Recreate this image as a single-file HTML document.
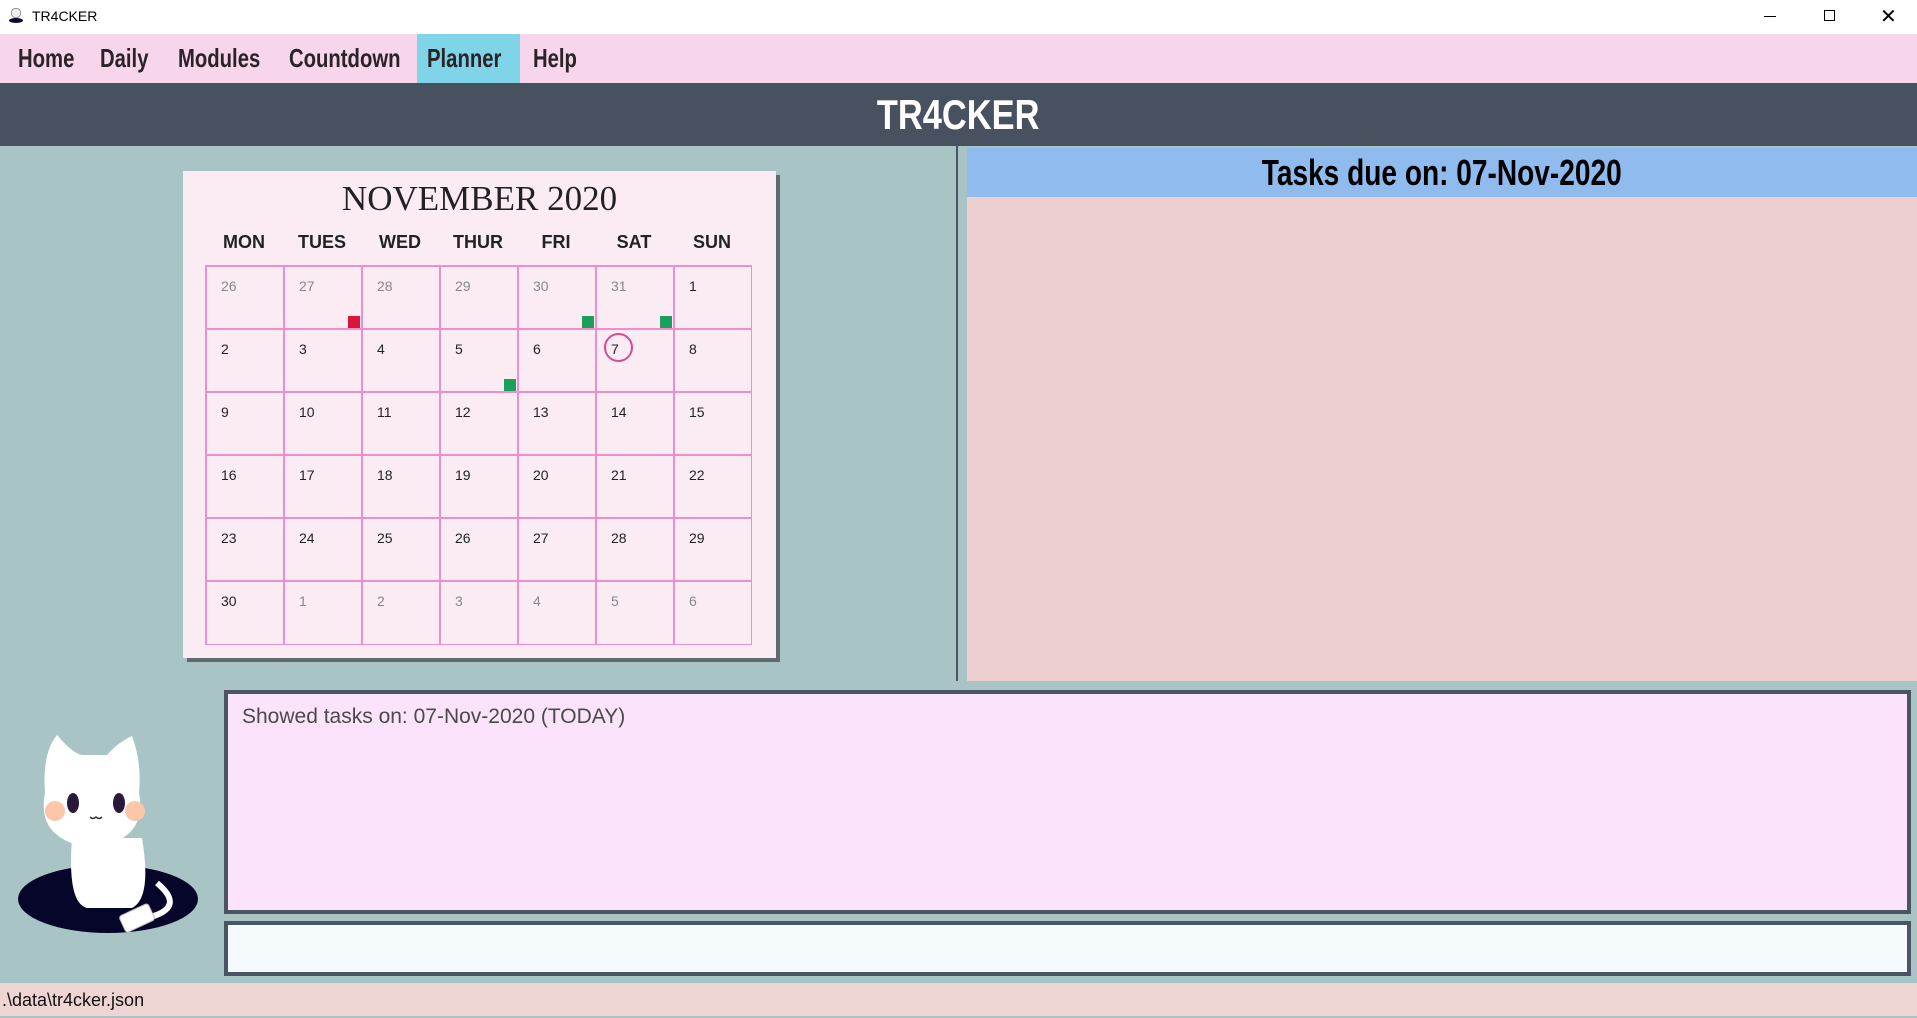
<!DOCTYPE html>
<html><head><meta charset="utf-8"><style>
*{margin:0;padding:0;box-sizing:border-box}
body{width:1917px;height:1016px;overflow:hidden;position:relative;background:#a8c4c4;font-family:"Liberation Sans",sans-serif}
.abs{position:absolute}
.hand{font-family:"Liberation Sans",sans-serif;font-weight:bold;display:inline-block;transform-origin:left center}
#title{left:0;top:0;width:1917px;height:34px;background:#fff;font-size:14px}
#menu{left:0;top:34px;width:1917px;height:49px;background:#f7d6eb}
.mi{position:absolute;top:0;height:49px;line-height:49px;font-size:26px;color:#2a2328;transform:scaleX(0.78)}
#hdr{left:0;top:83px;width:1917px;height:63px;background:#48515f;color:#fff;text-align:center;font-size:42px;line-height:63px}
#card{left:183px;top:171px;width:593px;height:487px;background:#fbecf4;box-shadow:4px 4px 0 #5f6a6e}
.cell{position:absolute;width:78px;height:63px;border:1px solid #ec8fcc;font-size:14px;color:#222;padding:11px 0 0 14px}
.g{color:#888}
.mk{position:absolute;width:12px;height:12px}
</style></head><body>
<div id="title" class="abs">
<div class="abs" style="left:10px;top:8px;width:12px;height:16px;"><div style="width:10px;height:10px;background:#eee;border:1px solid #999;border-radius:4px;margin-left:1px"></div><div style="width:14px;height:5px;background:#0a0a30;border-radius:50%;margin-left:-1px"></div></div>
<div class="abs" style="left:32px;top:8px;">TR4CKER</div>
<div class="abs" style="left:1764px;top:16px;width:12px;height:1px;background:#000"></div>
<div class="abs" style="left:1824px;top:10px;width:11px;height:11px;border:1px solid #000"></div>
<div class="abs" style="left:1880px;top:4px;font-size:20px;font-weight:300">✕</div>
</div>
<div id="menu" class="abs">
<div class="abs" style="left:417px;top:0;width:103px;height:49px;background:#7fd4e8"></div>
<div class="mi hand" style="left:18px">Home</div>
<div class="mi hand" style="left:100px">Daily</div>
<div class="mi hand" style="left:178px">Modules</div>
<div class="mi hand" style="left:289px">Countdown</div>
<div class="mi hand" style="left:427px">Planner</div>
<div class="mi hand" style="left:533px">Help</div>
</div>
<div id="hdr" class="abs"><span class="hand" style="transform:scaleX(0.82);transform-origin:center">TR4CKER</span></div>
<div class="abs" style="left:956px;top:146px;width:2px;height:535px;background:#4a5463"></div>
<div class="abs" style="left:967px;top:148px;width:950px;height:49px;background:#8fbbee;text-align:center;font-size:36px;line-height:49px;color:#000"><span class="hand" style="transform:scaleX(0.78);transform-origin:center">Tasks due on: 07-Nov-2020</span></div>
<div class="abs" style="left:967px;top:197px;width:950px;height:484px;background:#edcfd2"></div>
<div id="card" class="abs">
<div class="abs" style="left:0;top:8px;width:593px;text-align:center;font-family:'Liberation Serif',serif;font-size:35px;color:#222">NOVEMBER 2020</div>
<div class="abs" style="left:22px;top:61px;width:547px;font-size:18px;font-weight:bold;color:#222">
<span class="abs" style="left:0;width:78px;text-align:center">MON</span><span class="abs" style="left:78px;width:78px;text-align:center">TUES</span><span class="abs" style="left:156px;width:78px;text-align:center">WED</span><span class="abs" style="left:234px;width:78px;text-align:center">THUR</span><span class="abs" style="left:312px;width:78px;text-align:center">FRI</span><span class="abs" style="left:390px;width:78px;text-align:center">SAT</span><span class="abs" style="left:468px;width:78px;text-align:center">SUN</span>
</div>
<div class="abs" style="left:22px;top:94px;width:547px;height:380px;border:1px solid #ec8fcc">
<div class="cell g" style="left:0;top:0">26</div><div class="cell g" style="left:78px;top:0">27</div><div class="cell g" style="left:156px;top:0">28</div><div class="cell g" style="left:234px;top:0">29</div><div class="cell g" style="left:312px;top:0">30</div><div class="cell g" style="left:390px;top:0">31</div><div class="cell" style="left:468px;top:0">1</div>
<div class="cell" style="left:0;top:63px">2</div><div class="cell" style="left:78px;top:63px">3</div><div class="cell" style="left:156px;top:63px">4</div><div class="cell" style="left:234px;top:63px">5</div><div class="cell" style="left:312px;top:63px">6</div><div class="cell" style="left:390px;top:63px">7</div><div class="cell" style="left:468px;top:63px">8</div>
<div class="cell" style="left:0;top:126px">9</div><div class="cell" style="left:78px;top:126px">10</div><div class="cell" style="left:156px;top:126px">11</div><div class="cell" style="left:234px;top:126px">12</div><div class="cell" style="left:312px;top:126px">13</div><div class="cell" style="left:390px;top:126px">14</div><div class="cell" style="left:468px;top:126px">15</div>
<div class="cell" style="left:0;top:189px">16</div><div class="cell" style="left:78px;top:189px">17</div><div class="cell" style="left:156px;top:189px">18</div><div class="cell" style="left:234px;top:189px">19</div><div class="cell" style="left:312px;top:189px">20</div><div class="cell" style="left:390px;top:189px">21</div><div class="cell" style="left:468px;top:189px">22</div>
<div class="cell" style="left:0;top:252px">23</div><div class="cell" style="left:78px;top:252px">24</div><div class="cell" style="left:156px;top:252px">25</div><div class="cell" style="left:234px;top:252px">26</div><div class="cell" style="left:312px;top:252px">27</div><div class="cell" style="left:390px;top:252px">28</div><div class="cell" style="left:468px;top:252px">29</div>
<div class="cell" style="left:0;top:315px;height:64px">30</div><div class="cell g" style="left:78px;top:315px;height:64px">1</div><div class="cell g" style="left:156px;top:315px;height:64px">2</div><div class="cell g" style="left:234px;top:315px;height:64px">3</div><div class="cell g" style="left:312px;top:315px;height:64px">4</div><div class="cell g" style="left:390px;top:315px;height:64px">5</div><div class="cell g" style="left:468px;top:315px;height:64px">6</div>
<div class="mk" style="left:142px;top:50px;background:#dc143c"></div>
<div class="mk" style="left:376px;top:50px;background:#1ba05c"></div>
<div class="mk" style="left:454px;top:50px;background:#1ba05c"></div>
<div class="mk" style="left:298px;top:113px;background:#1ba05c"></div>
<div class="abs" style="left:398px;top:67px;width:29px;height:29px;border:2px solid #d64b92;border-radius:50%"></div>
</div>
</div>
<svg class="abs" style="left:17px;top:733px" width="182" height="200" viewBox="0 0 182 200">
<ellipse cx="91" cy="166" rx="90" ry="34" fill="#06062a"/>
<path d="M140 150 Q170 175 130 185" stroke="#fff" stroke-width="6" fill="none"/>
<rect x="104" y="176" width="32" height="18" rx="3" fill="#fff" stroke="#bbb" transform="rotate(-25 120 185)"/>
<path d="M55 105 Q50 170 70 175 L115 175 Q135 165 125 105 Z" fill="#fff"/>
<path d="M28 60 Q25 20 40 2 Q55 20 65 22 L90 22 Q100 10 115 3 Q125 30 122 60 Q130 100 90 112 L60 112 Q20 100 28 60 Z" fill="#fff"/>
<ellipse cx="38" cy="78" rx="10" ry="10" fill="#fbc7a8"/>
<ellipse cx="118" cy="78" rx="10" ry="10" fill="#fbc7a8"/>
<ellipse cx="56" cy="70" rx="6" ry="10" fill="#2a1a3a"/>
<ellipse cx="102" cy="70" rx="6" ry="10" fill="#2a1a3a"/>
<path d="M73 84 q3 3 6 0 q3 3 6 0" stroke="#333" stroke-width="1.5" fill="none"/>
</svg>
<div class="abs" style="left:224px;top:690px;width:1687px;height:224px;background:#fbe4fb;border:4px solid #4a5463;padding:11px 14px;font-size:21px;color:#4a4a4a">Showed tasks on: 07-Nov-2020 (TODAY)</div>
<div class="abs" style="left:224px;top:921px;width:1687px;height:55px;background:#f5fafd;border:4px solid #4a5463"></div>
<div class="abs" style="left:0;top:983px;width:1917px;height:33px;background:#efd4d4;font-size:18px;line-height:35px;padding-left:2px;color:#111">.\data\tr4cker.json</div>
</body></html>
